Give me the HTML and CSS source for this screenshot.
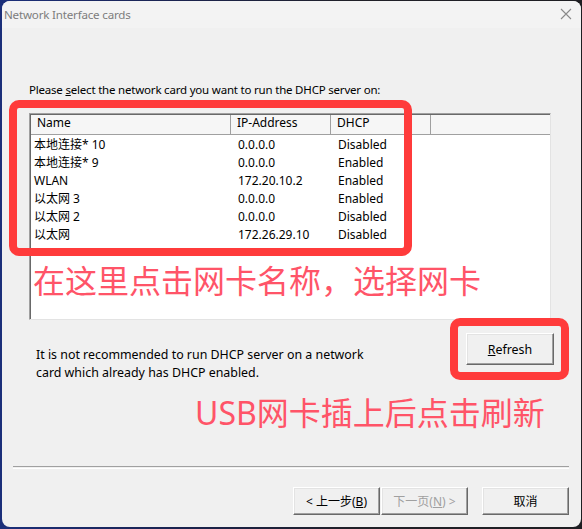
FILE: index.html
```html
<!DOCTYPE html>
<html lang="zh">
<head>
<meta charset="utf-8">
<title>Network Interface cards</title>
<link rel="stylesheet" href="styles.css">
</head>
<body>
<div class="window">
  <div class="titlebar">
    <span class="title">Network Interface cards</span>
    <svg class="close" width="12" height="12" viewBox="0 0 12 12"><path d="M1 1L11 11M11 1L1 11" stroke="#8a8a8a" stroke-width="1.1" fill="none"/></svg>
  </div>
  <div class="content">
    <div class="prompt">Please <u>s</u>elect the network card you want to run the DHCP server on:</div>
    <div class="list">
      <div class="list-head">
        <div class="hcell">Name</div>
        <div class="hcell">IP-Address</div>
        <div class="hcell">DHCP</div>
        <div class="hcell last"></div>
      </div>
      <div class="list-body">
        <div class="row"><span class="c1">本地连接* 10</span><span class="c2">0.0.0.0</span><span class="c3">Disabled</span></div>
        <div class="row"><span class="c1">本地连接* 9</span><span class="c2">0.0.0.0</span><span class="c3">Enabled</span></div>
        <div class="row"><span class="c1">WLAN</span><span class="c2">172.20.10.2</span><span class="c3">Enabled</span></div>
        <div class="row"><span class="c1">以太网 3</span><span class="c2">0.0.0.0</span><span class="c3">Enabled</span></div>
        <div class="row"><span class="c1">以太网 2</span><span class="c2">0.0.0.0</span><span class="c3">Disabled</span></div>
        <div class="row"><span class="c1">以太网</span><span class="c2">172.26.29.10</span><span class="c3">Disabled</span></div>
      </div>
    </div>
    <div class="lower">
      <div class="note">It is not recommended to run DHCP server on a network<br>card which already has DHCP enabled.</div>
      <button class="btn refresh"><u>R</u>efresh</button>
    </div>
  </div>
  <div class="footer">
    <div class="separator"></div>
    <div class="buttons">
      <button class="btn nav">&lt; 上一步(<u>B</u>)</button>
      <button class="btn nav disabled">下一页(<u>N</u>) &gt;</button>
      <button class="btn nav cancel">取消</button>
    </div>
  </div>

  <div class="mark mark-list"></div>
  <div class="mark mark-refresh"></div>
  <div class="hint hint-list">在这里点击网卡名称，选择网卡</div>
  <div class="hint hint-usb">USB网卡插上后点击刷新</div>
</div>
</body>
</html>
```
FILE: styles.css
```css
html, body {
  margin: 0;
  padding: 0;
}
body {
  width: 582px;
  height: 529px;
  overflow: hidden;
  background: linear-gradient(90deg, #1b2f7a 0%, #1a2350 30%, #202028 60%, #1e1e22 100%);
  font-family: "Noto Sans", "Noto Sans CJK SC", sans-serif;
  font-size: 12px;
  color: #000;
}
.window {
  position: relative;
  margin: 1px 1px 0 2px;
  width: 579px;
  height: 526px;
  border-radius: 8px;
  background: #f0f0f0;
  display: flex;
  flex-direction: column;
  overflow: hidden;
}
.titlebar {
  height: 27px;
  flex: none;
  display: flex;
  align-items: center;
  justify-content: space-between;
  padding: 0 9px 0 2px;
  background: #f3f3f3;
}
.title {
  color: #7d7d7d;
  font-size: 11.6px;
  letter-spacing: -0.2px;
}
.close {
  position: relative;
  top: -1px;
}
.content {
  padding-left: 27px;
}
.prompt {
  margin-top: 54px;
  height: 16px;
  line-height: 16px;
  font-size: 11.5px;
  letter-spacing: -0.2px;
}
.list {
  margin-top: 15px;
  width: 522px;
  height: 207px;
  box-sizing: border-box;
  background: #fff;
  border-top: 1px solid #a0a0a0;
  border-left: 1px solid #a0a0a0;
  border-right: 1px solid #e3e3e3;
  border-bottom: 1px solid #e3e3e3;
  box-shadow: inset 1px 1px 0 #696969;
}
.list-head {
  display: grid;
  grid-template-columns: 200px 100px 100px 1fr;
  height: 20px;
  margin: 1px 0 0 1px;
  background: #f0f0f0;
  border-bottom: 1px solid #a0a0a0;
  box-sizing: border-box;
}
.hcell {
  border-right: 1px solid #a0a0a0;
  padding-left: 6px;
  line-height: 16px;
  background: #f6f6f6;
}
.hcell.last {
  border-right: 0;
}
.list-body {
  padding-top: 1px;
}
.row {
  display: grid;
  grid-template-columns: 202px 100px 100px;
  height: 18px;
  line-height: 18px;
}
.c1 {
  padding-left: 4px;
}
.c2, .c3 {
  padding-left: 6px;
}
.lower {
  display: flex;
  justify-content: space-between;
  align-items: flex-start;
  width: 525px;
  margin-top: 13px;
}
.note {
  margin: 13px 0 0 7px;
  line-height: 18px;
  font-size: 12.4px;
}
.btn {
  font-family: "Noto Sans", "Noto Sans CJK SC", sans-serif;
  font-size: 12px;
  background: #f0f0f0;
  border-top: 1px solid #ffffff;
  border-left: 1px solid #ffffff;
  border-right: 1px solid #696969;
  border-bottom: 1px solid #696969;
  box-shadow: inset -1px -1px 0 #a0a0a0, inset 1px 1px 0 #e3e3e3;
  padding: 0;
  color: #000;
  box-sizing: border-box;
}
.refresh {
  width: 88px;
  height: 32px;
  font-size: 12.4px;
}
.footer {
  margin-top: auto;
  padding-bottom: 12px;
}
.separator {
  margin: 0 12px 0 11px;
  height: 1px;
  border-top: 1px solid #a0a0a0;
  border-bottom: 1px solid #ffffff;
}
.buttons {
  display: flex;
  justify-content: flex-end;
  gap: 1px;
  margin-top: 18px;
  padding-right: 12px;
}
.nav {
  width: 87px;
  height: 28px;
}
.disabled {
  color: #a0a0a0;
}
.cancel {
  margin-left: 13px;
}
.mark {
  position: absolute;
  border: 8px solid #ff3b3b;
  border-radius: 10px;
  box-sizing: border-box;
}
.mark-list {
  left: 7px;
  top: 99px;
  width: 403px;
  height: 156px;
}
.mark-refresh {
  left: 448px;
  top: 317px;
  width: 119px;
  height: 62px;
}
.hint {
  position: absolute;
  color: #ff5468;
  font-family: "Noto Sans CJK SC", "Noto Sans", sans-serif;
  font-size: 32px;
  line-height: 40px;
  white-space: nowrap;
}
.hint-list {
  left: 31px;
  top: 258px;
}
.hint-usb {
  left: 193px;
  top: 392px;
  font-family: "Noto Sans", "Noto Sans CJK SC", sans-serif;
}
```
